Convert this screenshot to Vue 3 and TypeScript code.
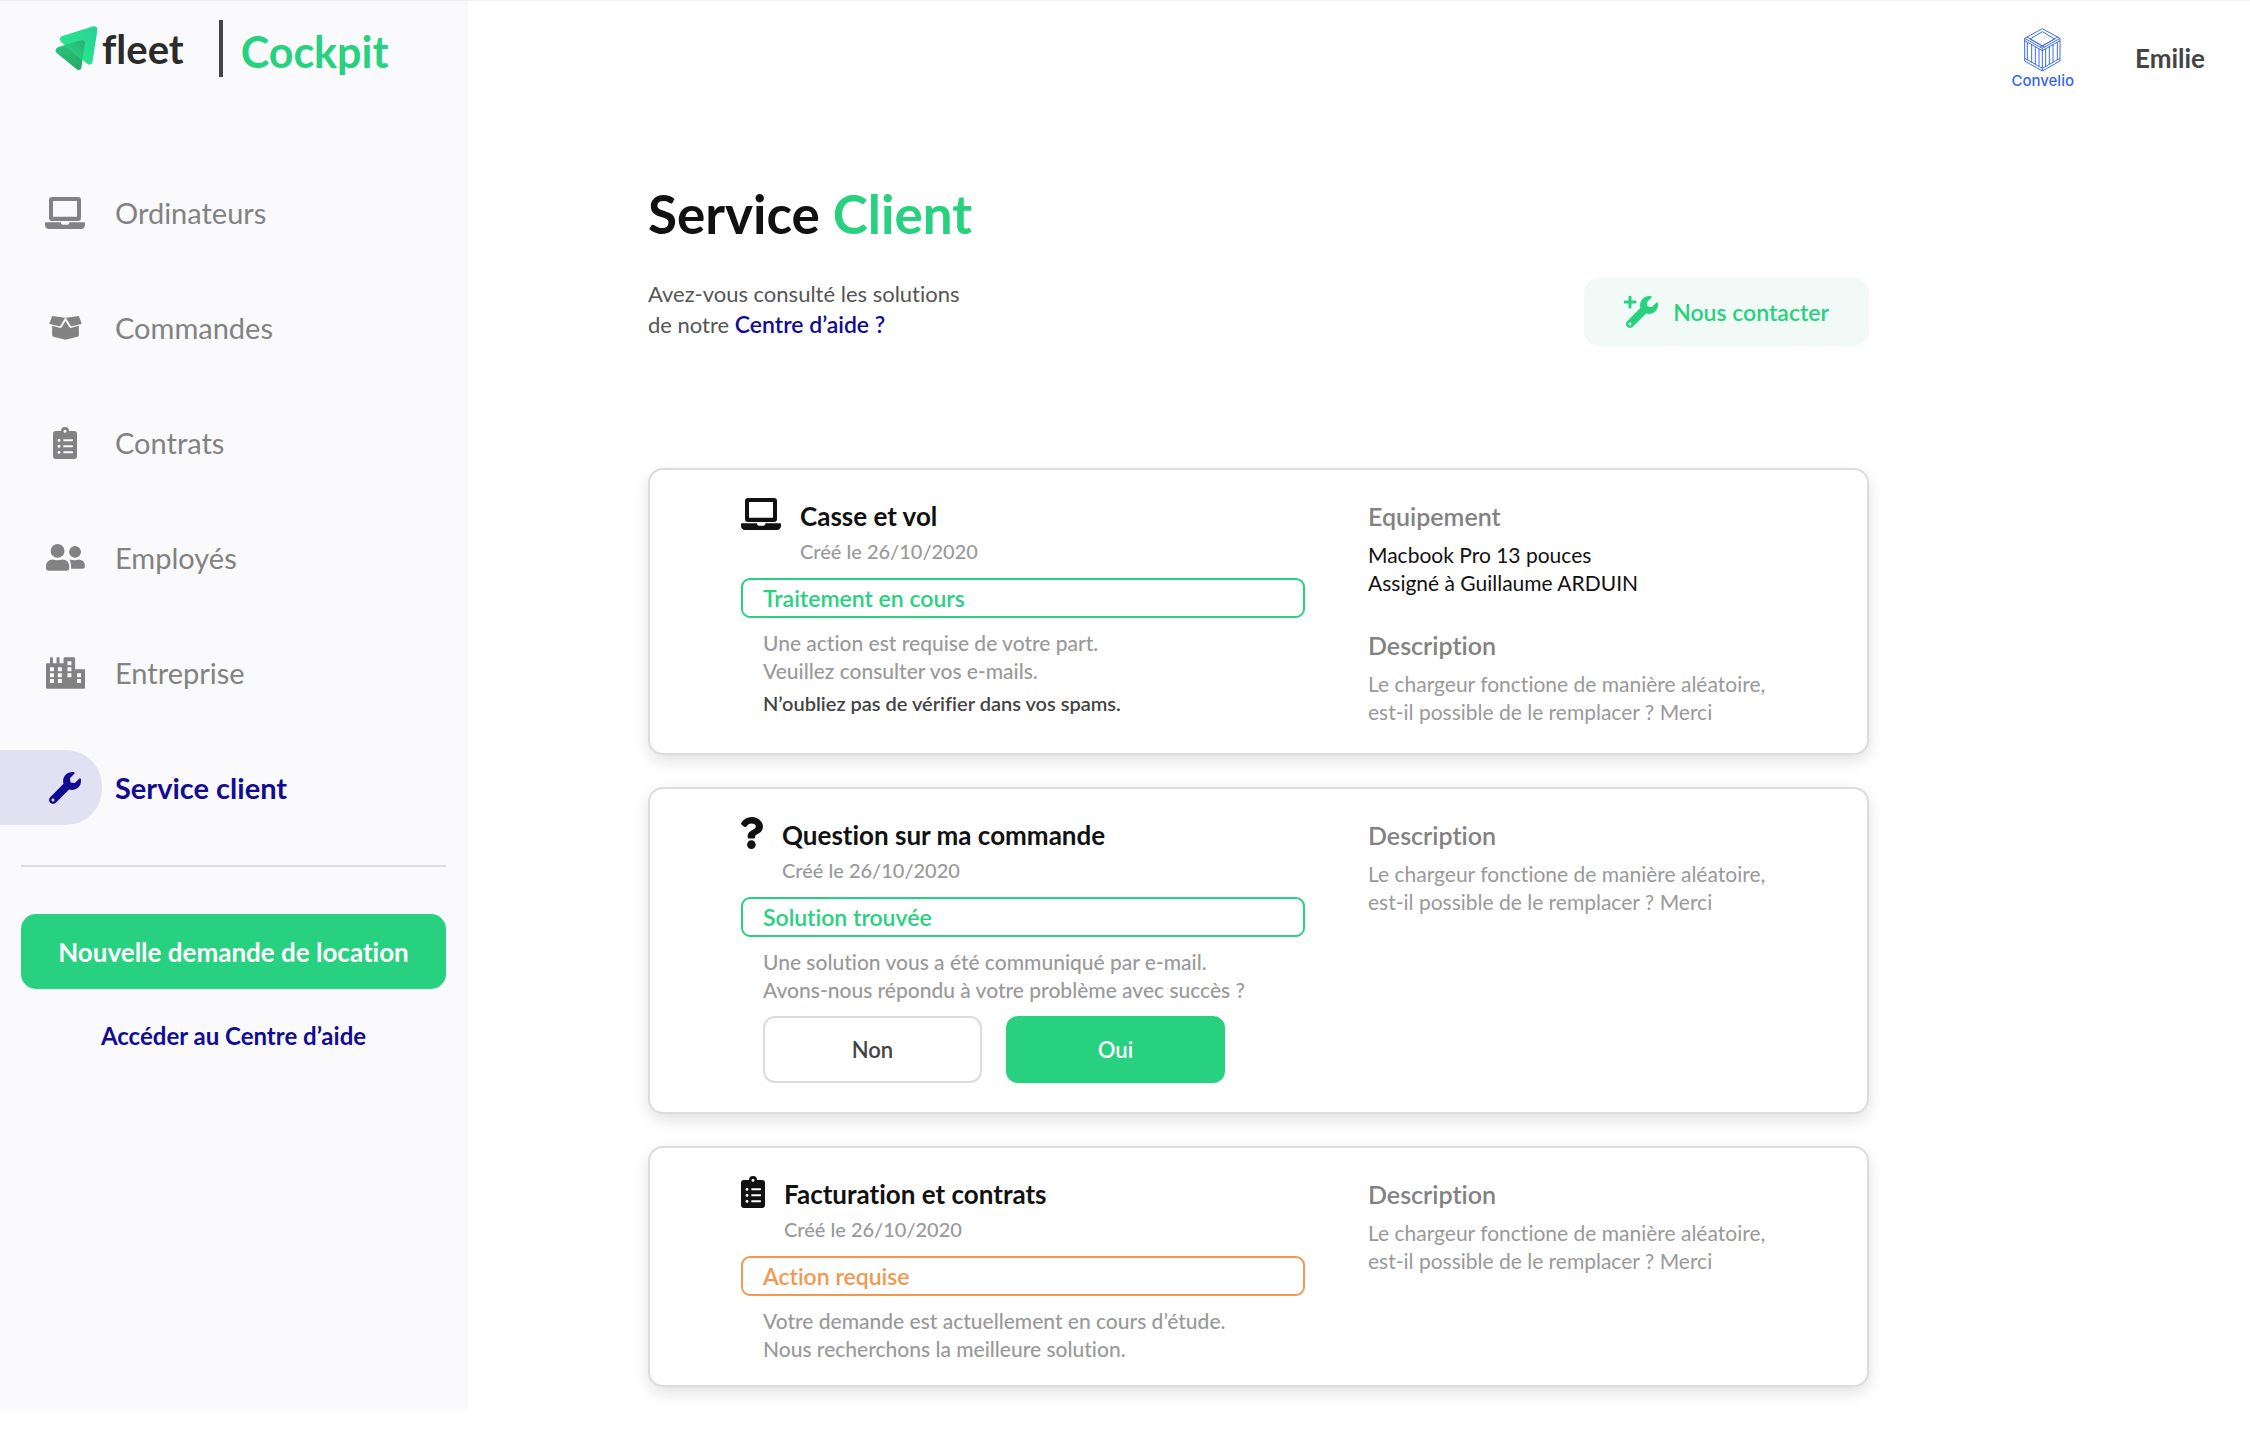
<script setup lang="ts">
interface NavItem {
  label: string
  icon: string
  active?: boolean
}

interface Block {
  title: string
  lines: string[]
  strong?: boolean
}

interface Ticket {
  icon: string
  title: string
  date: string
  status: string
  tone: 'green' | 'orange'
  lines: string[]
  note?: string
  ask?: boolean
  details: Block[]
}

interface Glyph {
  box: string
  w: number
  h: number
  d: string
}

const wrench =
  'M507.73 109.1c-2.24-9.03-13.54-12.09-20.12-5.51l-74.36 74.36-67.88-11.31-11.31-67.88 74.36-74.36c6.62-6.62 3.43-17.9-5.66-20.16-47.38-11.74-99.55.91-136.58 37.93-39.64 39.64-50.55 97.1-34.05 147.2L18.74 402.76c-24.99 24.99-24.99 65.51 0 90.5 24.99 24.99 65.51 24.99 90.5 0l213.21-213.21c50.12 16.71 107.47 5.68 147.37-34.22 37.07-37.07 49.7-89.32 37.91-136.73zM64 472c-13.25 0-24-10.75-24-24 0-13.26 10.75-24 24-24s24 10.74 24 24c0 13.25-10.75 24-24 24z'

const glyphs: Record<string, Glyph> = {
  laptop: {
    box: '0 0 120 96', w: 40, h: 32,
    d: 'M21 0h78a9 9 0 0 1 9 9v54a9 9 0 0 1-9 9H21a9 9 0 0 1-9-9V9a9 9 0 0 1 9-9zM24 12v47h72V12zM2 76h46c0 4 2 7 6 7h13c4 0 6-3 6-7h45a2 2 0 0 1 2 2v6c0 7-5 12-12 12H12C5 96 0 91 0 84v-6a2 2 0 0 1 2-2z',
  },
  box: {
    box: '0 0 98 72', w: 33, h: 24,
    d: 'M9 0L48 5 33 30Q32 32 30 31L2 24Q0 23 1 21zM89 0L50 5 65 30Q66 32 68 31L96 24Q98 23 97 21zM9 29L33 36Q36 36 38 33L49 15 60 33Q62 36 65 36L89 29V57Q89 61 85 62L49 71 13 62Q9 61 9 57z',
  },
  clipboard: {
    box: '0 0 72 96', w: 24, h: 32,
    d: 'M9 12h15a12 12 0 0 1 24 0h15a9 9 0 0 1 9 9v66a9 9 0 0 1-9 9H9a9 9 0 0 1-9-9V21a9 9 0 0 1 9-9zM36 8a4.500 4.500 0 1 0 0 9 4.500 4.500 0 1 0 0-9zM18 35a4.500 4.500 0 1 0 0 9 4.500 4.500 0 1 0 0-9zM18 53a4.500 4.500 0 1 0 0 9 4.500 4.500 0 1 0 0-9zM18 71a4.500 4.500 0 1 0 0 9 4.500 4.500 0 1 0 0-9zM31 36.500v6h27a2 2 0 0 0 2-2v-2a2 2 0 0 0-2-2zM31 54.500v6h27a2 2 0 0 0 2-2v-2a2 2 0 0 0-2-2zM31 72.500v6h27a2 2 0 0 0 2-2v-2a2 2 0 0 0-2-2z',
  },
  users: {
    box: '0 0 118 82', w: 39, h: 27,
    d: 'M35 0a21 21 0 1 0 0 42 21 21 0 1 0 0-42zM88 6a18 18 0 1 0 0 36 18 18 0 1 0 0-36zM20 47q15 5 30 0 20 1 20 21v6q0 7-8 7H8q-8 0-8-7v-6Q0 48 20 47zM71 47q17 4 29 0 18 2 18 20v2q0 6-7 6H76V66Q75 54 71 47z',
  },
  city: {
    box: '0 0 118 95', w: 39, h: 32,
    d: 'M3 18h9V2q0-2 2-2h5q2 0 2 2v16h11V2q0-2 2-2h5q2 0 2 2v16h12V4q0-4 4-4h27q4 0 4 4v32h27q4 0 4 4v51q0 4-4 4H4q-4 0-4-4V21q0-3 3-3zM12 30v12h12V30zM12 48v12h12V48zM12 66v12h12V66zM36 30v12h12V30zM36 48v12h12V48zM36 66v12h12V66zM65 12v12h12V12zM65 30v12h12V30zM65 48v12h12V48zM94 48v12h12V48zM94 66v12h12V66z',
  },
  wrench: { box: '0 0 512 512', w: 32, h: 32, d: wrench },
  question: {
    box: '25 0 353 512', w: 22, h: 32,
    d: 'M202.021 0C122.202 0 70.503 32.703 29.914 91.026c-7.363 10.58-5.093 25.086 5.178 32.874l43.138 32.709c10.373 7.865 25.132 6.026 33.253-4.148 25.049-31.381 43.63-49.449 82.757-49.449 30.764 0 68.816 19.799 68.816 49.631 0 22.552-18.617 34.134-48.993 51.164-35.423 19.86-82.299 44.576-82.299 106.405V320c0 13.255 10.745 24 24 24h72.471c13.255 0 24-10.745 24-24v-5.773c0-42.86 125.268-44.645 125.268-160.627C377.504 66.256 286.902 0 202.021 0zM192 373.459c-38.196 0-69.271 31.075-69.271 69.271 0 38.195 31.075 69.27 69.271 69.27s69.271-31.075 69.271-69.271-31.075-69.27-69.271-69.27z',
  },
}

const nav: NavItem[] = [
  { label: 'Ordinateurs', icon: 'laptop' },
  { label: 'Commandes', icon: 'box' },
  { label: 'Contrats', icon: 'clipboard' },
  { label: 'Employés', icon: 'users' },
  { label: 'Entreprise', icon: 'city' },
  { label: 'Service client', icon: 'wrench', active: true },
]

const description: Block = {
  title: 'Description',
  lines: ['Le chargeur fonctione de manière aléatoire,', 'est-il possible de le remplacer ? Merci'],
}

const tickets: Ticket[] = [
  {
    icon: 'laptop',
    title: 'Casse et vol',
    date: 'Créé le 26/10/2020',
    status: 'Traitement en cours',
    tone: 'green',
    lines: ['Une action est requise de votre part.', 'Veuillez consulter vos e-mails.'],
    note: 'N’oubliez pas de vérifier dans vos spams.',
    details: [
      { title: 'Equipement', lines: ['Macbook Pro 13 pouces', 'Assigné à Guillaume ARDUIN'], strong: true },
      description,
    ],
  },
  {
    icon: 'question',
    title: 'Question sur ma commande',
    date: 'Créé le 26/10/2020',
    status: 'Solution trouvée',
    tone: 'green',
    lines: ['Une solution vous a été communiqué par e-mail.', 'Avons-nous répondu à votre problème avec succès ?'],
    ask: true,
    details: [description],
  },
  {
    icon: 'clipboard',
    title: 'Facturation et contrats',
    date: 'Créé le 26/10/2020',
    status: 'Action requise',
    tone: 'orange',
    lines: ['Votre demande est actuellement en cours d’étude.', 'Nous recherchons la meilleure solution.'],
    details: [description],
  },
]
</script>

<template>
  <div class="page">
    <aside class="sidebar">
      <a class="brand" href="#">
        <svg class="mark" width="44" height="45" viewBox="0 0 132 135" aria-hidden="true">
          <defs>
            <linearGradient id="back" x1="0" y1="0" x2="1" y2="1">
              <stop offset="0" stop-color="#28c87c" />
              <stop offset="1" stop-color="#27a567" />
            </linearGradient>
            <linearGradient id="front" x1="1" y1="0" x2="0" y2="1">
              <stop offset="0" stop-color="#25d396" />
              <stop offset="1" stop-color="#2eea8b" />
            </linearGradient>
            <linearGradient id="fold" x1="1" y1="0" x2="0" y2="1">
              <stop offset="0" stop-color="#26b074" />
              <stop offset="1" stop-color="#2cdb85" />
            </linearGradient>
          </defs>
          <path d="M8 64L80 43Q90 42 90 52L79 126Q76 134 67 131L4 80Q-2 70 8 64z" fill="url(#back)" />
          <path d="M20 31L115 1Q128 0 127 13L112 110Q108 119 98 115L18 48Q10 38 20 31z" fill="url(#front)" />
          <path d="M28 57L80 43Q90 42 90 52L82 101z" fill="url(#fold)" />
        </svg>
        <span class="fleet">fleet</span>
        <span class="bar"></span>
        <span class="cockpit">Cockpit</span>
      </a>

      <nav class="nav">
        <a v-for="item in nav" :key="item.label" href="#" class="nav-item" :class="{ active: item.active }">
          <span class="slot">
            <svg :width="glyphs[item.icon].w" :height="glyphs[item.icon].h" :viewBox="glyphs[item.icon].box" aria-hidden="true">
              <path :d="glyphs[item.icon].d" fill="currentColor" fill-rule="evenodd" />
            </svg>
          </span>
          <span>{{ item.label }}</span>
        </a>
      </nav>

      <div class="actions">
        <button type="button" class="primary">Nouvelle demande de location</button>
        <a href="#" class="help">Accéder au Centre d’aide</a>
      </div>
    </aside>

    <main class="main">
      <header class="top">
        <div class="client">
          <svg width="37" height="44" viewBox="0 0 111 132" fill="none" stroke="#3b6cf3" stroke-width="3" aria-hidden="true">
            <path d="M55 2L108 31V99L55 129 2 99V31z" />
            <path d="M55 11L92 33 55 54 18 33z" />
            <path d="M2 31L55 61 108 31M2 38L55 68 108 38M9 27L62 58M101 27L48 58M55 61V129M2 91L55 121 108 91" />
            <path d="M10 43V96M23 50V102M34 56V108M45 62V115M65 62V115M76 56V108M87 50V102M100 43V96" />
          </svg>
          <span class="client-name">Convelio</span>
        </div>
        <span class="user">Emilie</span>
      </header>

      <div class="content">
        <h1>Service <span>Client</span></h1>
        <div class="intro">
          <p>Avez-vous consulté les solutions<br />de notre <a href="#">Centre d’aide ?</a></p>
          <button type="button" class="contact">
            <svg width="34" height="32" viewBox="0 0 34 32" aria-hidden="true">
              <path transform="translate(2 0) scale(.0625)" :d="wrench" fill="currentColor" />
              <path d="M6 1V11M1 6H11" stroke="currentColor" stroke-width="3" stroke-linecap="round" />
            </svg>
            <span>Nous contacter</span>
          </button>
        </div>

        <section class="tickets">
          <article v-for="t in tickets" :key="t.title" class="card">
            <div class="left">
              <div class="head">
                <svg :width="glyphs[t.icon].w" :height="glyphs[t.icon].h" :viewBox="glyphs[t.icon].box" aria-hidden="true">
                  <path :d="glyphs[t.icon].d" fill="currentColor" fill-rule="evenodd" />
                </svg>
                <div>
                  <h2>{{ t.title }}</h2>
                  <p class="date">{{ t.date }}</p>
                </div>
              </div>
              <p class="status" :class="t.tone">{{ t.status }}</p>
              <div class="body">
                <p v-for="l in t.lines" :key="l">{{ l }}</p>
                <p v-if="t.note" class="note">{{ t.note }}</p>
                <div v-if="t.ask" class="answers">
                  <button type="button" class="no">Non</button>
                  <button type="button" class="yes">Oui</button>
                </div>
              </div>
            </div>
            <div class="right">
              <div v-for="b in t.details" :key="b.title" class="block">
                <h3>{{ b.title }}</h3>
                <p v-for="l in b.lines" :key="l" :class="{ strong: b.strong }">{{ l }}</p>
              </div>
            </div>
          </article>
        </section>
      </div>
    </main>
  </div>
</template>

<style>
body {
  margin: 0;
  background: #fff;
}
</style>

<style scoped>
.page {
  display: grid;
  grid-template-columns: 468px 1fr;
  box-sizing: border-box;
  border-top: 1px solid #f1f1f3;
  font-family: Lato, "Open Sans", sans-serif;
  font-variant-ligatures: none;
  color: #111;
}
h1, h2, h3, p {
  margin: 0;
}
a {
  color: inherit;
  text-decoration: none;
}
button {
  font-family: inherit;
  font-variant-ligatures: none;
  cursor: pointer;
}
svg {
  display: block;
  flex: none;
}

.sidebar {
  background: #fafafd;
}
.brand {
  display: flex;
  align-items: center;
  height: 57px;
  padding: 19px 0 0 55px;
}
.fleet {
  margin-left: 3px;
  font-size: 40px;
  font-weight: 700;
  color: #2b2b2b;
}
.bar {
  width: 4px;
  height: 57px;
  margin: 0 18px 0 35px;
  background: #444;
}
.cockpit {
  padding-top: 6px;
  font-size: 43px;
  font-weight: 700;
  color: #28d17f;
}
.nav {
  display: flex;
  flex-direction: column;
  gap: 40px;
  padding-top: 98px;
}
.nav-item {
  display: flex;
  align-items: center;
  gap: 13px;
  height: 75px;
  font-size: 29px;
  color: #828282;
}
.slot {
  display: flex;
  align-items: center;
  justify-content: center;
  box-sizing: border-box;
  width: 102px;
  height: 75px;
  padding-left: 28px;
}
.active {
  font-weight: 700;
  color: #120c93;
}
.active .slot {
  background: #e2e1f1;
  border-radius: 0 36px 36px 0;
}
.actions {
  display: flex;
  flex-direction: column;
  margin: 40px 22px 0 21px;
  padding-top: 47px;
  border-top: 2px solid #dedee1;
  text-align: center;
}
.primary {
  height: 75px;
  border: 0;
  border-radius: 15px;
  background: #28d17f;
  color: #fff;
  font-size: 26px;
  font-weight: 700;
}
.help {
  margin-top: 31px;
  font-size: 24px;
  line-height: 32px;
  font-weight: 700;
  color: #120c93;
}

.top {
  display: flex;
  justify-content: flex-end;
  align-items: center;
  gap: 61px;
  height: 114px;
  padding-right: 45px;
}
.client {
  display: flex;
  flex-direction: column;
  align-items: center;
}
.client-name {
  font-family: Inter, sans-serif;
  font-size: 15px;
  line-height: 17px;
  font-weight: 500;
  color: #3565ee;
}
.user {
  font-size: 26px;
  font-weight: 700;
  color: #444;
}
.content {
  max-width: 1221px;
  padding: 69px 40px 22px 180px;
}
h1 {
  font-size: 53px;
  line-height: 60px;
  font-weight: 700;
}
h1 span {
  color: #28d17f;
}
.intro {
  display: flex;
  justify-content: space-between;
  align-items: flex-start;
  margin-top: 34px;
  height: 68px;
}
.intro p {
  font-size: 22px;
  line-height: 31px;
  color: #555;
}
.intro a {
  font-size: 23px;
  font-weight: 600;
  color: #120c93;
}
.contact {
  display: flex;
  align-items: center;
  gap: 15px;
  height: 68px;
  padding: 0 40px;
  border: 0;
  border-radius: 15px;
  background: #f1faf6;
  color: #28d17f;
  font-size: 23px;
  font-weight: 600;
}
.tickets {
  display: flex;
  flex-direction: column;
  gap: 32px;
  margin-top: 122px;
}
.card {
  display: grid;
  grid-template-columns: 564px 1fr;
  column-gap: 63px;
  padding: 28px 40px 22px 91px;
  border: 2px solid #dcdcdc;
  border-radius: 15px;
  background: #fff;
  box-shadow: 0 6px 16px rgba(0, 0, 0, 0.12);
}
.head {
  display: flex;
  gap: 19px;
}
h2, h3 {
  font-size: 26px;
  line-height: 36px;
  font-weight: 700;
}
h3 {
  margin-bottom: 7px;
  font-size: 25px;
  font-weight: 600;
  color: #828282;
}
.date {
  font-size: 20px;
  line-height: 34px;
  font-weight: 500;
  color: #999;
}
.status {
  box-sizing: border-box;
  height: 40px;
  margin-top: 10px;
  padding-left: 20px;
  border: 2px solid currentColor;
  border-radius: 9px;
  font-size: 23px;
  line-height: 36px;
  font-weight: 600;
}
.green {
  color: #28d17f;
}
.orange {
  color: #f0994f;
}
.body {
  padding: 11px 0 0 22px;
  font-size: 21px;
  line-height: 28px;
  font-weight: 500;
  color: #999;
}
.note {
  margin-top: 4px;
  font-size: 20px;
  font-weight: 600;
  color: #444;
}
.answers {
  display: flex;
  gap: 24px;
  margin: 12px 0 7px;
}
.answers button {
  width: 219px;
  height: 67px;
  border-radius: 12px;
  font-size: 22px;
  font-weight: 600;
}
.no {
  border: 2px solid #dcdcdc;
  background: #fff;
  color: #444;
}
.yes {
  border: 0;
  background: #28d17f;
  color: #fff;
}
.right {
  display: flex;
  flex-direction: column;
  gap: 30px;
  padding-bottom: 5px;
  font-size: 21px;
  line-height: 28px;
  color: #999;
}
.strong {
  color: #111;
}
</style>
